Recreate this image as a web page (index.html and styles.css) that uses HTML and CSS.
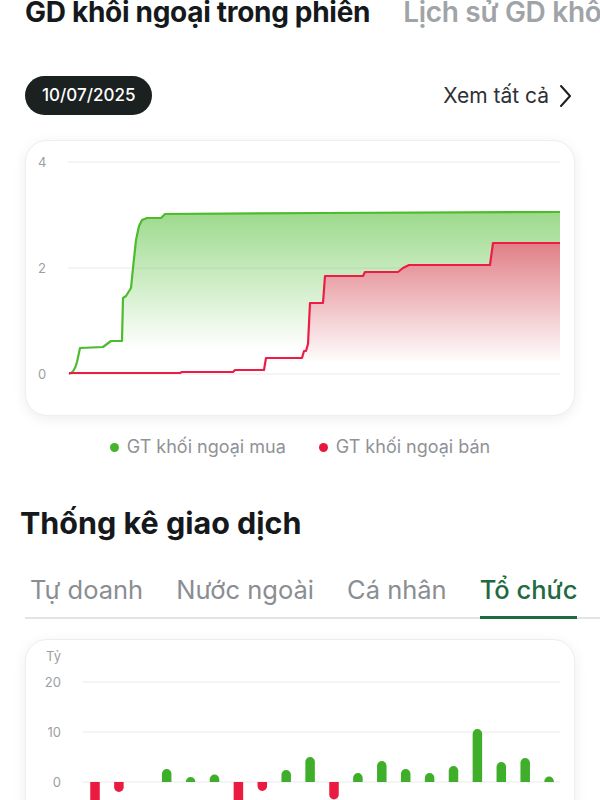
FILE: index.html
```html
<!DOCTYPE html>
<html lang="vi">
<head>
  <meta charset="UTF-8" />
  <title>GD khối ngoại</title>
  <link rel="stylesheet" href="styles.css">
</head>
<body>
  <div class="top-tabs">
    <span class="top-tab active">GD khối ngoại trong phiên</span>
    <span class="top-tab">Lịch sử GD khối ngoại</span>
  </div>

  <div class="toolbar">
    <span class="date-pill">10/07/2025</span>
    <a class="see-all" href="#">Xem tất cả
      <svg width="14" height="24" viewBox="0 0 14 24"><path d="M3 2 L12 12 L3 22" fill="none" stroke="#1d1d1d" stroke-width="2" stroke-linecap="round" stroke-linejoin="round"/></svg>
    </a>
  </div>

  <!-- Biểu đồ giá trị GD khối ngoại lũy kế -->
  <div class="card line-card">
    <svg width="550" height="276" viewBox="0 0 550 276">
      <defs>
        <linearGradient id="gBuy" gradientUnits="userSpaceOnUse" x1="0" y1="72" x2="0" y2="234">
          <stop offset="0" stop-color="#4cbb2e" stop-opacity="0.55"/>
          <stop offset="0.85" stop-color="#4cbb2e" stop-opacity="0"/>
        </linearGradient>
        <linearGradient id="gSell" gradientUnits="userSpaceOnUse" x1="0" y1="103" x2="0" y2="234">
          <stop offset="0" stop-color="#cc2a36" stop-opacity="0.6"/>
          <stop offset="0.92" stop-color="#cc2a36" stop-opacity="0"/>
        </linearGradient>
      </defs>
      <g class="grid">
        <line x1="43" y1="22" x2="535" y2="22"/>
        <line x1="43" y1="128" x2="535" y2="128"/>
        <line x1="43" y1="234" x2="535" y2="234"/>
      </g>
      <g class="axis">
        <text x="13" y="27">4</text>
        <text x="13" y="133">2</text>
        <text x="13" y="239">0</text>
      </g>
      <path fill="url(#gBuy)" d="M44,234 C48,233 50,230 52,222 L55,208 L78,207 L82,204 L86,201 L97,201 L98,158 L101,156 L106,148 L108,128 L111,100 L114,86 L117,80 L122,78 L136,78 L140,74 L300,73 L535,72 L535,234 Z"/>
      <path fill="#fff" d="M44,233 L155,233 L157,232 L208,232 L210,230 L239,230 L241,218 L277,218 L279,211 L281,211 L283,204 L285,163 L298,163 L300,136 L338,136 L340,132 L373,132 L378,128 L384,125 L465,125 L468,103 L535,103 L535,233 Z"/>
      <path fill="url(#gSell)" d="M44,233 L155,233 L157,232 L208,232 L210,230 L239,230 L241,218 L277,218 L279,211 L281,211 L283,204 L285,163 L298,163 L300,136 L338,136 L340,132 L373,132 L378,128 L384,125 L465,125 L468,103 L535,103 L535,233 Z"/>
      <path class="buy-line" d="M44,234 C48,233 50,230 52,222 L55,208 L78,207 L82,204 L86,201 L97,201 L98,158 L101,156 L106,148 L108,128 L111,100 L114,86 L117,80 L122,78 L136,78 L140,74 L300,73 L535,72"/>
      <path class="sell-line" d="M44,233 L155,233 L157,232 L208,232 L210,230 L239,230 L241,218 L277,218 L279,211 L281,211 L283,204 L285,163 L298,163 L300,136 L338,136 L340,132 L373,132 L378,128 L384,125 L465,125 L468,103 L535,103"/>
    </svg>
  </div>

  <div class="legend">
    <span class="legend-item"><i class="dot buy"></i>GT khối ngoại mua</span>
    <span class="legend-item"><i class="dot sell"></i>GT khối ngoại bán</span>
  </div>

  <h2 class="section-title">Thống kê giao dịch</h2>

  <div class="sub-tabs">
    <span class="sub-tab">Tự doanh</span>
    <span class="sub-tab">Nước ngoài</span>
    <span class="sub-tab">Cá nhân</span>
    <span class="sub-tab active">Tổ chức</span>
  </div>

  <!-- Biểu đồ cột giá trị ròng -->
  <div class="card bar-card">
    <svg id="bars" width="550" height="260" viewBox="0 0 550 260">
      <g class="grid">
        <line x1="58" y1="43" x2="535" y2="43"/>
        <line x1="58" y1="93" x2="535" y2="93"/>
        <line x1="58" y1="143" x2="535" y2="143"/>
      </g>
      <g class="axis right">
        <text x="36" y="22">Tỷ</text>
        <text x="36" y="48">20</text>
        <text x="36" y="98">10</text>
        <text x="36" y="148">0</text>
      </g>
    </svg>
  </div>

  <script>
    // giá trị ròng theo phiên (tỷ)
    const values = [-6, -2, 0, 2.6, 1, 1.5, -6, -1.8, 2.4, 5, -3.5, 1.8, 4.2, 2.6, 1.8, 3.2, 10.6, 4, 4.8, 1.1];
    const svg = document.getElementById('bars');
    const zero = 143, scale = 5, w = 9.5, r = w / 2;

    values.forEach((v, i) => {
      if (!v) return;
      const x = 70 + i * 23.9 - r;
      const h = Math.abs(v) * scale;
      const p = document.createElementNS('http://www.w3.org/2000/svg', 'path');
      let d;
      if (v > 0) {
        const top = zero - h;
        d = `M${x},${zero} L${x},${top + r} A${r},${r} 0 0 1 ${x + w},${top + r} L${x + w},${zero} Z`;
      } else {
        const bot = zero + h;
        d = `M${x},${zero} L${x},${bot - r} A${r},${r} 0 0 0 ${x + w},${bot - r} L${x + w},${zero} Z`;
      }
      p.setAttribute('d', d);
      p.setAttribute('fill', v > 0 ? '#3fae2a' : '#ea1a40');
      svg.appendChild(p);
    });
  </script>
</body>
</html>
```

FILE: styles.css
```css
body { margin: 0; padding: 0 25px; font-family: Inter, "Noto Sans", sans-serif; color: #161a1d; background: #fff; overflow: hidden; white-space: nowrap; }

.top-tabs { display: flex; gap: 33px; margin-top: -5px; height: 33px; line-height: 34px; font-size: 28px; font-weight: 700; letter-spacing: -0.3px; overflow: hidden; margin-right: -25px; }
.top-tab { color: #a0a4a7; font-weight: 600; }
.top-tab.active { color: #15191c; font-weight: 700; }

.toolbar { display: flex; align-items: center; justify-content: space-between; margin-top: 48px; }
.date-pill { display: inline-block; height: 39px; line-height: 39px; padding: 0 17px; border-radius: 20px; background: #1b2021; color: #fff; font-size: 17px; font-weight: 500; }
.see-all { display: flex; align-items: center; gap: 9px; color: #2e3134; text-decoration: none; font-size: 21px; margin-right: 3px; }

.card { background: #fff; border: 1px solid #eeeeee; border-radius: 22px; box-shadow: 0 3px 14px rgba(0, 0, 0, 0.07); overflow: hidden; }
.card svg { display: block; margin: -1px; }
.line-card { margin-top: 25px; height: 274px; }
.bar-card { margin-top: 20px; height: 260px; }

.grid line { stroke: #e9e9ea; stroke-width: 1.2; }
.axis text { font-size: 13px; fill: #9c9fa2; font-family: Inter, "Noto Sans", sans-serif; }
.axis.right text { text-anchor: end; }
.buy-line { fill: none; stroke: #4cbb2e; stroke-width: 2.2; stroke-linejoin: round; }
.sell-line { fill: none; stroke: #ee1c45; stroke-width: 2.2; stroke-linejoin: round; }

.legend { display: flex; justify-content: center; gap: 33px; margin-top: 19px; font-size: 18px; line-height: 24px; color: #8f9296; }
.legend-item { display: flex; align-items: center; gap: 8px; }
.dot { display: inline-block; width: 9px; height: 9px; border-radius: 50%; }
.dot.buy { background: #44b52c; }
.dot.sell { background: #e6193c; }

.section-title { margin: 45px 0 0 -5px; font-size: 30.5px; font-weight: 700; line-height: 38px; color: #15191c; }

.sub-tabs { display: flex; gap: 33px; margin: 33px -25px 0 0; padding-left: 5px; border-bottom: 2px solid #e3e4e5; font-size: 25.5px; line-height: 30px; color: #8a8e92; }
.sub-tab { padding-bottom: 11px; margin-bottom: -2px; border-bottom: 3px solid transparent; }
.sub-tab.active { color: #1d6b3f; font-weight: 500; border-bottom-color: #1d6b3f; }
```
